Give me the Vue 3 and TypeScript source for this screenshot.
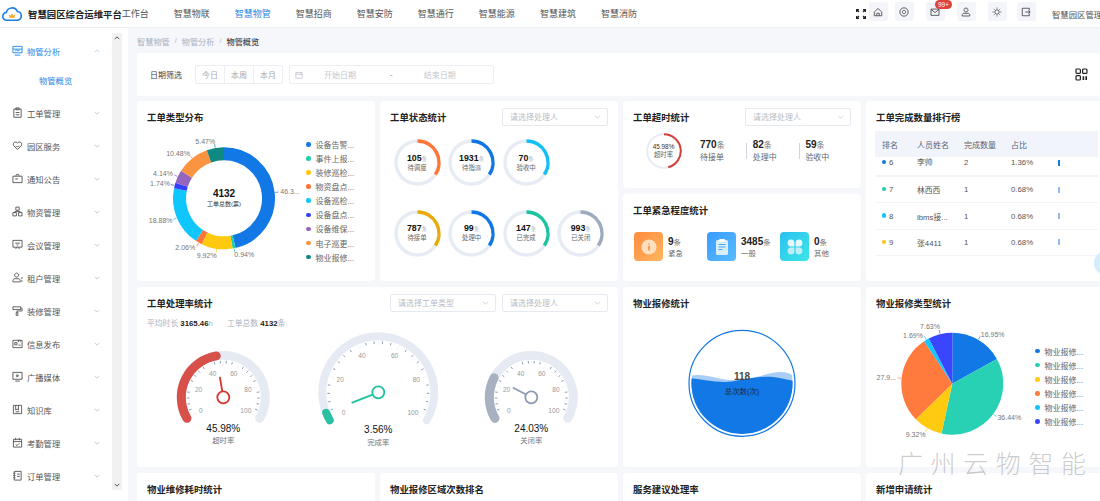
<template>
  <div class="page">
    <header class="topbar">
      <svg class="logo" viewBox="0 0 20 16" width="20" height="16">
        <path d="M5 14.2a3.9 3.9 0 0 1-.6-7.8 5.8 5.8 0 0 1 11-.9 4.4 4.4 0 0 1 .2 8.7z" fill="none" stroke="#1b7fe0" stroke-width="1.6" />
        <path d="M6.8 8.2l1.7 1.5L10 7.6l1.5 2.1 1.7-1.5-.7 3.6H7.5z" fill="#f5a623" />
      </svg>
      <span class="brand">智慧园区综合运维平台</span>
      <nav class="topnav">
        <a v-for="item in topNav" :key="item" :class="{ on: item === '智慧物管' }">{{ item }}</a>
      </nav>
      <svg class="full" viewBox="0 0 10 10" width="10" height="10">
        <path d="M0.6 3V.6H3M7 .6h2.4V3M9.4 7v2.4H7M3 9.4H.6V7M1 1l2 2M9 1L7 3M9 9L7 7M1 9l2-2" fill="none" stroke="#222" stroke-width="1.2" />
      </svg>
      <div class="tools">
        <span v-for="(t, i) in tools" :key="i" class="tool">
          <svg viewBox="0 0 12 12" width="10" height="10"><path :d="t" fill="none" stroke="#444" stroke-width="1" /></svg>
          <em v-if="i === 2" class="badge">99+</em>
        </span>
      </div>
      <span class="user">智慧园区管理员</span>
    </header>

    <div class="body">
      <aside class="side">
        <ul class="menu">
          <template v-for="(m, i) in menu" :key="m.name">
            <li class="menu-item" :class="{ on: i === 0 }">
              <svg viewBox="0 0 12 12" width="11" height="11"><path :d="m.icon" fill="none" stroke="currentColor" stroke-width="1" /></svg>
              <span>{{ m.name }}</span>
              <svg class="chev" viewBox="0 0 8 5" width="6" height="4"><path :d="i === 0 ? 'M1 4l3-3 3 3' : 'M1 1l3 3 3-3'" fill="none" stroke="currentColor" stroke-width=".8" /></svg>
            </li>
            <li v-if="i === 0" class="menu-sub">物管概览</li>
          </template>
        </ul>
        <div class="scroll">
          <svg viewBox="0 0 8 5" width="6" height="4"><path d="M1 4l3-3 3 3" fill="none" stroke="#444" stroke-width="1.2" /></svg>
          <svg viewBox="0 0 8 5" width="6" height="4"><path d="M1 1l3 3 3-3" fill="none" stroke="#444" stroke-width="1.2" /></svg>
        </div>
      </aside>

      <main class="main">
        <div class="crumb">
          <span>智慧物管</span><i>/</i><span>物管分析</span><i>/</i><b>物管概览</b>
        </div>

        <section class="filter">
          <label>日期筛选</label>
          <div class="btns"><span>今日</span><span>本周</span><span>本月</span></div>
          <div class="range">
            <svg viewBox="0 0 10 10" width="8" height="8"><path d="M1 2h8v7H1zM1 4.2h8M3 1v2M7 1v2" fill="none" stroke="#b5b9c2" stroke-width=".8" /></svg>
            <span class="r1">开始日期</span><span class="r2">-</span><span class="r3">结束日期</span>
          </div>
          <svg class="grid-ico" viewBox="0 0 13 13" width="13" height="13">
            <rect x="1" y="1" width="4.4" height="4.4" rx="1" fill="none" stroke="#222" stroke-width="1.2" />
            <rect x="7.6" y="1" width="4.4" height="4.4" rx="1" fill="none" stroke="#222" stroke-width="1.2" />
            <rect x="1" y="7.6" width="4.4" height="4.4" rx="1" fill="none" stroke="#222" stroke-width="1.2" />
            <path d="M7.6 8.2h1.6v3.8H7.6zM10.4 8.2H12v3.8h-1.6z" fill="#222" />
          </svg>
        </section>

        <div class="grid">
          <!-- 工单类型分布 -->
          <section class="card">
            <div class="head"><h3>工单类型分布</h3></div>
            <div class="pie-wrap">
              <svg viewBox="0 0 168 149" width="168" height="149">
                <path v-for="s in donut" :key="s.label" :d="arc(87, 66.3, 44.5, s.from, s.to)" fill="none" :stroke="s.color" stroke-width="13" />
                <path v-for="s in donut" :key="s.label + 'l'" :d="leader(87, 66.3, 51.5, 55, s.from, s.to)" fill="none" :stroke="s.color" stroke-width=".7" />
                <text v-for="s in donut" :key="s.label + 't'" :x="s.x" :y="s.y" class="t-label" text-anchor="middle" dominant-baseline="central">{{ s.label }}</text>
                <text x="87" y="61.5" class="t-total" text-anchor="middle" dominant-baseline="central">4132</text>
                <text x="87" y="72" class="t-sub" text-anchor="middle" dominant-baseline="central">工单总数(票)</text>
              </svg>
              <ul class="legend">
                <li v-for="s in donut" :key="s.name"><i :style="{ background: s.color }"></i>{{ s.name }}</li>
              </ul>
            </div>
          </section>

          <!-- 工单状态统计 -->
          <section class="card">
            <div class="head"><h3>工单状态统计</h3><div class="select">请选择处理人<svg viewBox="0 0 8 5" width="7" height="4"><path d="M1 1l3 3 3-3" fill="none" stroke="#b8bcc4" stroke-width=".8" /></svg></div></div>
            <div class="rings">
              <template v-for="r in rings" :key="r.label">
                <div class="ring" :class="{ brk: r.label === '待接单' }">
                  <svg viewBox="0 0 47 47" width="47" height="47">
                    <circle cx="23.5" cy="23.5" r="21.5" fill="none" stroke="#e7ecf4" stroke-width="3.4" />
                    <path :d="arc(23.5, 23.5, 21.5, 0, 124)" fill="none" :stroke="r.color" stroke-width="3.4" />
                  </svg>
                  <div class="ring-text">
                    <p><b>{{ r.num }}</b><small>条</small></p>
                    <span>{{ r.label }}</span>
                  </div>
                </div>
              </template>
            </div>
          </section>

          <div class="stack">
            <!-- 工单超时统计 -->
            <section class="card">
              <div class="head"><h3>工单超时统计</h3><div class="select">请选择处理人<svg viewBox="0 0 8 5" width="7" height="4"><path d="M1 1l3 3 3-3" fill="none" stroke="#b8bcc4" stroke-width=".8" /></svg></div></div>
              <div class="over">
                <div class="over-ring">
                  <svg viewBox="0 0 36 36" width="36" height="36">
                    <circle cx="18" cy="18" r="16.8" fill="none" stroke="#e7ecf4" stroke-width="2" />
                    <path :d="arc(18, 18, 16.8, 0, 165.5)" fill="none" stroke="#d6403b" stroke-width="2" />
                  </svg>
                  <div class="ring-text small"><p>45.98%</p><span>超时率</span></div>
                </div>
                <div v-for="s in overStats" :key="s.label" class="stat">
                  <p><b>{{ s.num }}</b><small>条</small></p>
                  <span>{{ s.label }}</span>
                </div>
              </div>
            </section>
            <!-- 工单紧急程度统计 -->
            <section class="card">
              <div class="head"><h3>工单紧急程度统计</h3></div>
              <div class="urgent">
                <div class="u-item">
                  <span class="u-ico orange">
                    <svg viewBox="0 0 18 18" width="18" height="18"><circle cx="9" cy="9" r="7.6" fill="#ffe3c4" opacity=".95" /><path d="M9 5.6v.9M9 7.8v4.6" stroke="#f08a3c" stroke-width="1.5" /></svg>
                  </span>
                  <div class="u-text"><p><b>9</b><small>条</small></p><span>紧急</span></div>
                </div>
                <div class="u-item">
                  <span class="u-ico blue">
                    <svg viewBox="0 0 18 18" width="18" height="20"><rect x="3" y="2" width="12" height="15" rx="1.6" fill="#d9eefc" /><rect x="6" y="1" width="6" height="2.4" rx="1" fill="#fff" /><path d="M5.5 6.5h7M5.5 9h7M5.5 11.5h4" stroke="#4aa8f3" stroke-width="1" /></svg>
                  </span>
                  <div class="u-text"><p><b>3485</b><small>条</small></p><span>一般</span></div>
                </div>
                <div class="u-item">
                  <span class="u-ico cyan">
                    <svg viewBox="0 0 18 18" width="18" height="18"><g fill="#e4f8fc"><path d="M8.4 8.4H4.8a3.4 3.4 0 1 1 3.6-3.6z" /><path d="M9.6 8.4h3.6a3.4 3.4 0 1 0-3.6-3.6z" /></g><g fill="#bdeef6"><path d="M8.4 9.6H4.8a3.4 3.4 0 1 0 3.6 3.6z" /><path d="M9.6 9.6h3.6a3.4 3.4 0 1 1-3.6 3.6z" /></g></svg>
                  </span>
                  <div class="u-text"><p><b>0</b><small>条</small></p><span>其他</span></div>
                </div>
              </div>
            </section>
          </div>

          <!-- 工单完成数量排行榜 -->
          <section class="card">
            <div class="head"><h3>工单完成数量排行榜</h3></div>
            <div class="table">
              <div class="tr th"><span>排名</span><span>人员姓名</span><span>完成数量</span><span>占比</span></div>
              <div v-for="(r, i) in ranks" :key="r.no" class="tr" :class="{ cut: i === 0 }">
                <span class="no"><i :style="{ background: r.color }"></i>{{ r.no }}</span>
                <span>{{ r.name }}</span><span>{{ r.count }}</span><span>{{ r.pct }}</span>
                <em class="bar" :class="{ strong: i === 0 }"></em>
              </div>
            </div>
          </section>

          <!-- 工单处理率统计 -->
          <section class="card wide">
            <div class="head">
              <h3>工单处理率统计</h3>
              <div class="selects">
                <div class="select">请选择工单类型<svg viewBox="0 0 8 5" width="7" height="4"><path d="M1 1l3 3 3-3" fill="none" stroke="#b8bcc4" stroke-width=".8" /></svg></div>
                <div class="select">请选择处理人<svg viewBox="0 0 8 5" width="7" height="4"><path d="M1 1l3 3 3-3" fill="none" stroke="#b8bcc4" stroke-width=".8" /></svg></div>
              </div>
            </div>
            <p class="avg">平均时长 <b>3165.46</b>h<span class="gap"></span>工单总数 <b>4132</b>条</p>
            <svg class="gauges" viewBox="0 0 481 135" width="481" height="135">
              <g v-for="g in gauges" :key="g.label">
                <path :d="arc(g.x, g.y, g.r, -120, 120)" fill="none" stroke="#e6ebf3" :stroke-width="g.w" stroke-linecap="round" />
                <path :d="arc(g.x, g.y, g.r, -120, -120 + 2.4 * g.value)" fill="none" :stroke="g.color" :stroke-width="g.w" stroke-linecap="round" />
                <path v-for="t in ticks" :key="t" :d="tick(g, t)" fill="none" :stroke="t % 10 === 0 ? '#eef1f6' : '#6f84a6'" stroke-width=".8" />
                <text v-for="n in [0, 20, 40, 60, 80, 100]" :key="n" :x="lx(g, n)" :y="ly(g, n)" class="t-tick" text-anchor="middle" dominant-baseline="central">{{ n }}</text>
                <path :d="needle(g)" :stroke="g.color2" stroke-width="1.8" stroke-linecap="round" fill="none" />
                <circle :cx="g.x" :cy="g.y" r="6" fill="#fff" :stroke="g.color2" stroke-width="1.8" />
                <text :x="g.x" :y="g.ty" class="t-val" text-anchor="middle" dominant-baseline="central">{{ g.value }}%</text>
                <text :x="g.x" :y="g.ty + 12.4" class="t-lab" text-anchor="middle" dominant-baseline="central">{{ g.label }}</text>
              </g>
            </svg>
          </section>

          <!-- 物业报修统计 -->
          <section class="card">
            <div class="head"><h3>物业报修统计</h3></div>
            <svg viewBox="0 0 238 149" width="238" height="149" class="block">
              <defs><clipPath id="liquid"><circle cx="119" cy="65.3" r="50.6" /></clipPath></defs>
              <circle cx="119" cy="65.3" r="53" fill="#fff" stroke="#1278e6" stroke-width="1.2" />
              <g clip-path="url(#liquid)">
                <path d="M66 58C80 54 95 62 110 62 130 62 145 54 158 54 164 54 168 56 172 59V130H66z" fill="#a9cdf5" />
                <path d="M66 60C80 61 96 66 112 63 126 60 140 58 150 59 158 60 164 62 172 63V130H66z" fill="#1278e6" />
              </g>
              <text x="119" y="58.5" class="t-liq" text-anchor="middle" dominant-baseline="central">118</text>
              <text x="119" y="73" class="t-liq2" text-anchor="middle" dominant-baseline="central">总次数(次)</text>
            </svg>
          </section>

          <!-- 物业报修类型统计 -->
          <section class="card">
            <div class="head"><h3>物业报修类型统计</h3></div>
            <div class="pie-wrap">
              <svg viewBox="0 0 168 149" width="168" height="149">
                <path v-for="s in pie" :key="s.label" :d="sector(86.3, 65.7, 51, s.from, s.to)" :fill="s.color" />
                <path v-for="s in pie" :key="s.label + 'l'" :d="leader(86.3, 65.7, 51.5, 55, s.from, s.to)" fill="none" :stroke="s.color" stroke-width=".7" />
                <text v-for="s in pie" :key="s.label + 't'" :x="s.x" :y="s.y" class="t-label" text-anchor="middle" dominant-baseline="central">{{ s.label }}</text>
              </svg>
              <ul class="legend short">
                <li v-for="s in pie" :key="s.label"><i :style="{ background: s.color }"></i>物业报修...</li>
              </ul>
            </div>
          </section>

          <section class="card"><div class="head"><h3>物业维修耗时统计</h3></div></section>
          <section class="card"><div class="head"><h3>物业报修区域次数排名</h3></div></section>
          <section class="card"><div class="head"><h3>服务建议处理率</h3></div></section>
          <section class="card"><div class="head"><h3>新增申请统计</h3></div></section>
        </div>
      </main>
    </div>

    <div class="blob"></div>
    <div class="watermark">广州云物智能</div>
  </div>
</template>

<script setup lang="ts">
interface Gauge {
  x: number
  y: number
  r: number
  w: number
  value: number
  label: string
  color: string
  color2: string
  ty: number
  labelR: number
  len: number
}

const topNav = ['工作台', '智慧物联', '智慧物管', '智慧招商', '智慧安防', '智慧通行', '智慧能源', '智慧建筑', '智慧消防']

const tools = [
  'M1.5 6L6 1.8 10.5 6v4.5h-9zM4.5 10.5V7.5h3v3',
  'M6 1a5 5 0 1 0 .01 0zM6 4a2 2 0 1 0 .01 0z',
  'M1.2 2.5h9.6v7.5H1.2zM1.2 3l4.8 3.6L10.8 3',
  'M6 1.2a2.4 2.4 0 1 0 .01 0zM1.5 10.8V9.4c0-1 1-1.8 2-1.8h5c1 0 2 .8 2 1.8v1.4z',
  'M6 3.4a2.6 2.6 0 1 0 .01 0zM6 .6v1.4M6 10v1.4M.6 6H2M10 6h1.4M2.2 2.2l1 1M8.8 8.8l1 1M9.8 2.2l-1 1M3.2 8.8l-1 1',
  'M10 4V1.5H1.5v9H10V8M5 6h6M8.8 4l2.2 2-2.2 2',
]

const menu = [
  { name: '物管分析', icon: 'M1 1.5h10v7H1zM1 4.5h10M3.5 6.5l1.5-1 1.5 1 2-1.2M3 11h6' },
  { name: '工单管理', icon: 'M2 2.2h8v9H2zM4.2 1h3.6v2H4.2zM4 6h4M4 8.5h4' },
  { name: '园区服务', icon: 'M6 10.5L1.8 6.2A2.5 2.5 0 0 1 6 3.3a2.5 2.5 0 0 1 4.2 2.9zM4 6.5c1 1 3 1 4 0' },
  { name: '通知公告', icon: 'M1 3.5h10v7H1zM4 3.5L5 1.5h2l1 2M3.5 6.5h3' },
  { name: '物资管理', icon: 'M4.2 1.2h3.6v3.4H4.2zM1 7.2h3.8v3.6H1zM7.2 7.2H11v3.6H7.2zM6 4.6v1.5M3 7.2V6.1h6v1.1' },
  { name: '会议管理', icon: 'M1 1.5h10v7.4H1zM4 11l1-2.1M8 11L7 8.9M3.5 4.5h5M5 6.5h2' },
  { name: '租户管理', icon: 'M5 1.2a2.2 2.2 0 1 0 .01 0zM1 10.8V9.2c0-1 1-1.9 2-1.9h4c1 0 2 .9 2 1.9v1.6zM10.8 5.5v2M10.8 8.8v2' },
  { name: '装修管理', icon: 'M1 2h8.5v3H1zM9.5 3.5H11v3H5.5v1.5M4.6 8h1.8v3.4H4.6z' },
  { name: '信息发布', icon: 'M1 2.5h10v8H1zM3 5h2.5v2.5H3zM7 2v2.5M9 2v2M7 7.8h2.4' },
  { name: '广播媒体', icon: 'M1 1.5h10v7.5H1zM3.5 11h5M5.2 4l2 1.2-2 1.2z' },
  { name: '知识库', icon: 'M1.5 1.5h9v9h-9zM4 1.5v5l1.5-1 1.5 1v-5M4 8.5h4' },
  { name: '考勤管理', icon: 'M1.5 2.5h9v8.5h-9zM1.5 5h9M4 1v2.5M8 1v2.5M4 8l1.5 1.4L8 6.8' },
  { name: '订单管理', icon: 'M2.5 1.5h7.5v9.5H2.5zM1.2 3.5h2.6M1.2 6h2.6M1.2 8.5h2.6M5.5 4.5h3M5.5 7h3' },
]

const rings = [
  { num: 105, label: '待调度', color: '#ff7636' },
  { num: 1931, label: '待指派', color: '#0f76e6' },
  { num: 70, label: '验收中', color: '#12c0f5' },
  { num: 787, label: '待接单', color: '#e8ab08' },
  { num: 99, label: '处理中', color: '#0f76e6' },
  { num: 147, label: '已完成', color: '#1cc4a0' },
  { num: 993, label: '已关闭', color: '#9eabbe' },
]

const overStats = [
  { num: 770, label: '待接单' },
  { num: 82, label: '处理中' },
  { num: 59, label: '验收中' },
]

const ranks = [
  { no: 6, name: '李帅', count: 2, pct: '1.36%', color: '#0f76e6' },
  { no: 7, name: '林西西', count: 1, pct: '0.68%', color: '#1fcfae' },
  { no: 8, name: 'ibms接...', count: 1, pct: '0.68%', color: '#12c6ff' },
  { no: 9, name: '张4411', count: 1, pct: '0.68%', color: '#ffc20e' },
]

function spread<T extends { pct: number }>(list: T[]) {
  let at = 0
  return list.map((s) => {
    const from = at
    at += (s.pct / 100) * 360
    return { ...s, from, to: at }
  })
}

const donut = spread([
  { name: '设备告警...', label: '46.3...', pct: 46.37, color: '#1278e6', x: 153, y: 59.3 },
  { name: '事件上报...', label: '0.94%', pct: 0.94, color: '#1fcfae', x: 107.3, y: 122 },
  { name: '装修巡检...', label: '9.92%', pct: 9.92, color: '#ffc90f', x: 69.7, y: 123.3 },
  { name: '物资盘点...', label: '2.06%', pct: 2.06, color: '#ff7439', x: 48.3, y: 115 },
  { name: '设备巡检...', label: '18.88%', pct: 18.88, color: '#10c6ff', x: 23.7, y: 88 },
  { name: '设备盘点...', label: '1.74%', pct: 1.74, color: '#3440ff', x: 23, y: 51.7 },
  { name: '设备维保...', label: '4.14%', pct: 4.14, color: '#9566bd', x: 26, y: 41.7 },
  { name: '电子巡更...', label: '10.48%', pct: 10.48, color: '#fb9440', x: 41, y: 21 },
  { name: '物业报修...', label: '5.47%', pct: 5.47, color: '#0f8a82', x: 68.3, y: 9 },
])

const pie = spread([
  { label: '16.95%', pct: 16.95, color: '#1278e6', x: 126.7, y: 16 },
  { label: '36.44%', pct: 36.44, color: '#28d1b4', x: 143.3, y: 99.3 },
  { label: '9.32%', pct: 9.32, color: '#ffca10', x: 49.7, y: 116 },
  { label: '27.9...', pct: 27.97, color: '#ff7a3d', x: 20.3, y: 59.7 },
  { label: '1.69%', pct: 1.69, color: '#12c6ff', x: 47, y: 17 },
  { label: '7.63%', pct: 7.63, color: '#3a45ff', x: 64, y: 8.7 },
])

const gauges: Gauge[] = [
  { x: 86.3, y: 66.3, r: 42, w: 9, value: 45.98, label: '超时率', color: '#d8504a', color2: '#d8352f', ty: 97.3, labelR: 26, len: 20 },
  { x: 241.3, y: 61.3, r: 56, w: 8, value: 3.56, label: '完成率', color: '#2cc0a3', color2: '#1fc2a0', ty: 98.7, labelR: 40, len: 28 },
  { x: 394.3, y: 66.3, r: 42, w: 9, value: 24.03, label: '关闭率', color: '#a7b1c0', color2: '#8c9bb3', ty: 97.3, labelR: 26, len: 20 },
]

const ticks = Array.from({ length: 51 }, (_, i) => i * 2).filter((t) => t % 10 === 0 || t % 4 === 0)

function pt(cx: number, cy: number, r: number, deg: number) {
  const a = (deg * Math.PI) / 180
  return [+(cx + r * Math.sin(a)).toFixed(2), +(cy - r * Math.cos(a)).toFixed(2)]
}

function arc(cx: number, cy: number, r: number, from: number, to: number) {
  const [x1, y1] = pt(cx, cy, r, from)
  const [x2, y2] = pt(cx, cy, r, to)
  return `M${x1} ${y1}A${r} ${r} 0 ${to - from > 180 ? 1 : 0} 1 ${x2} ${y2}`
}

function sector(cx: number, cy: number, r: number, from: number, to: number) {
  return `${arc(cx, cy, r, from, to)}L${cx} ${cy}Z`
}

function leader(cx: number, cy: number, r1: number, r2: number, from: number, to: number) {
  const mid = (from + to) / 2
  const [x1, y1] = pt(cx, cy, r1, mid)
  const [x2, y2] = pt(cx, cy, r2, mid)
  return `M${x1} ${y1}L${x2} ${y2}`
}

function tick(g: Gauge, t: number) {
  const deg = -120 + 2.4 * t
  const outer = g.r - g.w / 2 - 1
  const inner = outer - (t % 10 === 0 ? 5 : 2.6)
  const [x1, y1] = pt(g.x, g.y, outer, deg)
  const [x2, y2] = pt(g.x, g.y, inner, deg)
  return `M${x1} ${y1}L${x2} ${y2}`
}

const lx = (g: Gauge, n: number) => pt(g.x, g.y, g.labelR, -120 + 2.4 * n)[0]
const ly = (g: Gauge, n: number) => pt(g.x, g.y, g.labelR, -120 + 2.4 * n)[1]

function needle(g: Gauge) {
  const [x, y] = pt(g.x, g.y, g.len, -120 + 2.4 * g.value)
  return `M${g.x} ${g.y}L${x} ${y}`
}
</script>

<style>
html, body { margin: 0; height: 100%; overflow: hidden; background: #fff; }
</style>

<style scoped>
* { box-sizing: border-box; }
.page {
  position: relative;
  width: 1100px;
  height: 501px;
  overflow: hidden;
  font-family: "Liberation Sans", "Noto Sans CJK SC", sans-serif;
  font-size: 8px;
  color: #333;
}
p, ul, h3 { margin: 0; padding: 0; }
ul { list-style: none; }
i, em { font-style: normal; }

/* 顶栏 */
.topbar {
  height: 28px;
  display: flex;
  align-items: center;
  border-bottom: 1px solid #eceef2;
  padding-left: 2px;
  white-space: nowrap;
}
.logo { flex: none; }
.brand { margin-left: 6px; font-size: 9.4px; font-weight: 700; color: #222; width: 113px; }
.topnav { display: flex; gap: 25px; font-size: 9px; color: #555; }
.topnav .on { color: #1f87e8; }
.full { margin-left: 219px; flex: none; }
.tools { display: flex; margin-left: 3px; align-self: flex-start; padding-top: 2px; }
.tool {
  position: relative;
  width: 19px;
  height: 19px;
  background: #f3f5fb;
  border-radius: 2px;
  display: flex;
  align-items: center;
  justify-content: center;
  margin-right: 7px;
}
.tool:nth-child(2), .tool:nth-child(3), .tool:nth-child(4) { margin-right: 12px; }
.tool:nth-child(5) { margin-right: 10px; }
.tool:nth-child(6) { margin-right: 16px; }
.badge {
  position: absolute;
  top: -2px;
  left: 9px;
  height: 9px;
  line-height: 9px;
  padding: 0 3px;
  border-radius: 5px;
  background: #e0403a;
  color: #fff;
  font-size: 6.5px;
}
.user { font-size: 8.4px; color: #555; }

.body { display: flex; height: 473px; }

/* 侧栏 */
.side { width: 128px; flex: none; display: flex; padding-right: 6px; padding-top: 5px; padding-bottom: 11px; background: #fff; }
.menu { width: 112px; padding-top: 1px; flex: none; overflow: hidden; }
.menu-item {
  height: 33px;
  display: flex;
  align-items: center;
  gap: 4px;
  padding: 0 12px;
  font-size: 8.3px;
  color: #555;
}
.menu-item svg { flex: none; }
.menu-item.on { color: #1f87e8; }
.chev { margin-left: auto; color: #aaa; }
.menu-item.on .chev { color: #8fbdee; }
.menu-sub { height: 29px; line-height: 29px; padding-left: 39px; font-size: 8.3px; color: #1f87e8; }
.scroll {
  width: 10px;
  background: #f1f1f1;
  display: flex;
  flex-direction: column;
  justify-content: space-between;
  align-items: center;
  padding: 3px 0;
}

/* 内容 */
.main { flex: 1; min-width: 0; background: #f6f7fb; padding-left: 9px; overflow: hidden; }
.crumb { height: 25px; display: flex; align-items: center; font-size: 8.2px; color: #a9b0bc; }
.crumb i { margin: 0 5px; font-size: 7px; }
.crumb b { color: #444; font-weight: 500; }

.filter {
  height: 43px;
  margin-bottom: 5px;
  background: #fff;
  border-radius: 3px;
  display: flex;
  align-items: center;
  padding: 0 12.5px 0 13px;
  font-size: 8px;
}
.filter label { width: 45px; color: #444; }
.btns { display: flex; height: 19px; border: 1px solid #eceef3; border-radius: 2px; width: 88px; }
.btns span { flex: 1; display: flex; align-items: center; justify-content: center; color: #aaa; border-left: 1px solid #eceef3; }
.btns span:first-child { border-left: 0; }
.range {
  margin-left: 6px;
  width: 205px;
  height: 19px;
  border: 1px solid #eceef3;
  border-radius: 2px;
  display: flex;
  align-items: center;
  padding-left: 5px;
  color: #c4c7ce;
}
.r1 { margin-left: 21px; }
.r2 { margin-left: 34px; color: #888; }
.r3 { margin-left: 31px; }
.grid-ico { margin-left: auto; }

.grid {
  display: grid;
  grid-template-columns: repeat(4, 238px);
  grid-auto-rows: 180px;
  column-gap: 5px;
  row-gap: 6px;
}
.card { background: #fff; border-radius: 4px; min-height: 0; }
.wide { grid-column: span 2; }
.stack { display: flex; flex-direction: column; gap: 6px; }
.stack .card { flex: 1; }
.head { height: 31px; display: flex; align-items: center; justify-content: space-between; padding: 0 10px; }
.head h3 { font-size: 9.4px; font-weight: 700; color: #222; white-space: nowrap; }
.select {
  width: 106px;
  height: 18px;
  border: 1px solid #e6e9f0;
  border-radius: 2px;
  padding: 0 6px 0 7px;
  display: flex;
  align-items: center;
  justify-content: space-between;
  color: #b8bcc4;
  font-size: 8px;
}
.selects { display: flex; gap: 6px; }
.block { display: block; }

.pie-wrap { display: flex; }
.pie-wrap svg { flex: none; }
.legend { padding-top: 5.3px; }
.legend.short { padding-top: 26px; margin-left: 0; }
.legend li { height: 14.1px; display: flex; align-items: center; color: #666; font-size: 8px; white-space: nowrap; }
.legend i { width: 4.6px; height: 4.6px; border-radius: 50%; margin: 0 4.6px 0 1.4px; flex: none; }

.t-label { font-size: 7px; fill: #777; }
.t-total { font-size: 10px; font-weight: 700; fill: #111; }
.t-sub { font-size: 6px; fill: #333; }
.t-tick { font-size: 6.6px; fill: #999; }
.t-val { font-size: 10px; fill: #111; }
.t-lab { font-size: 7.4px; fill: #777; }
.t-liq { font-size: 10px; font-weight: 700; fill: #444; }
.t-liq2 { font-size: 7.4px; fill: #1a2a40; }

.rings {
  display: grid;
  grid-template-columns: repeat(4, 47px);
  column-gap: 7.6px;
  row-gap: 23.6px;
  padding: 7px 0 0 13.5px;
}
.ring, .over-ring { position: relative; }
.ring svg, .over-ring svg { display: block; }
.brk { grid-column: 1; }
.ring-text {
  position: absolute;
  inset: 0;
  display: flex;
  flex-direction: column;
  align-items: center;
  justify-content: center;
  text-align: center;
  line-height: 1;
}
.ring-text p { font-size: 8.8px; color: #111; white-space: nowrap; }
.ring-text small { font-size: 5.5px; color: #a8b2c4; font-weight: 400; }
.ring-text span { font-size: 6.4px; color: #666; margin-top: 2.4px; }
.ring-text.small p { font-size: 6.4px; color: #333; }
.ring-text.small span { margin-top: 2px; }

.over { display: flex; align-items: center; padding: 1px 0 0 22.5px; }
.over-ring { width: 36px; margin-right: 18.5px; }
.stat { position: relative; width: 52.7px; line-height: 1.2; }
.stat p { font-size: 10px; color: #222; }
.stat small { font-size: 8px; color: #777; font-weight: 400; }
.stat span { font-size: 8px; color: #666; display: block; margin-top: 2px; }
.stat + .stat::before {
  content: "";
  position: absolute;
  left: -6.5px;
  top: 4px;
  width: 1px;
  height: 16px;
  background: #cfd6e2;
}

.urgent { display: flex; padding: 7px 0 0 11px; }
.u-item { width: 73px; display: flex; gap: 5px; }
.u-ico {
  width: 29px;
  height: 29px;
  border-radius: 4px;
  display: flex;
  align-items: center;
  justify-content: center;
  flex: none;
}
.orange { background: linear-gradient(135deg, #ff8a3d, #ffb760); }
.blue { background: linear-gradient(135deg, #3a9cff, #58bcff); }
.cyan { background: linear-gradient(135deg, #2cc0ef, #3de6e8); }
.u-text { line-height: 1.1; padding-top: 4px; white-space: nowrap; }
.u-text p { font-size: 10px; color: #222; }
.u-text small { font-size: 7.4px; color: #777; font-weight: 400; }
.u-text span { font-size: 7.4px; color: #666; display: block; margin-top: 3px; }

.table { margin: -1px 6px 0 9px; }
.tr {
  position: relative;
  display: grid;
  grid-template-columns: 35px 47px 47px 47px;
  align-items: center;
  padding-left: 7px;
  height: 26.4px;
  border-bottom: 1px solid #f1f3f8;
  font-size: 7.8px;
  color: #555;
}
.tr.th { height: 26px; background: #f1f4fa; border-bottom: 0; color: #5a6478; font-size: 8px; }
.tr.cut { height: 20px; align-items: start; line-height: 12px; border-bottom-width: 2px; }
.no i { display: inline-block; width: 4.4px; height: 4.4px; border-radius: 50%; margin-right: 2.6px; vertical-align: 1px; }
.bar { position: absolute; left: 183px; top: 50%; margin-top: -3px; width: 1.6px; height: 6px; background: #8fbdee; }
.cut .bar { top: 3px; margin-top: 0; }
.bar.strong { background: #1278e6; }

.avg { height: 14px; line-height: 14px; margin-top: -1px; padding-left: 10px; font-size: 7.8px; color: #a8b2c4; }
.avg b { color: #222; }
.gap { display: inline-block; width: 14px; }
.gauges { display: block; }

/* 悬浮物 */
.blob {
  position: absolute;
  left: 1094px;
  top: 251px;
  width: 24px;
  height: 24px;
  border-radius: 50%;
  background: #d5ecfb;
}
.watermark {
  position: absolute;
  left: 898px;
  top: 447px;
  font-size: 25px;
  line-height: 34px;
  letter-spacing: 7.6px;
  color: rgba(130, 130, 130, 0.42);
  font-weight: 300;
  white-space: nowrap;
}
</style>
